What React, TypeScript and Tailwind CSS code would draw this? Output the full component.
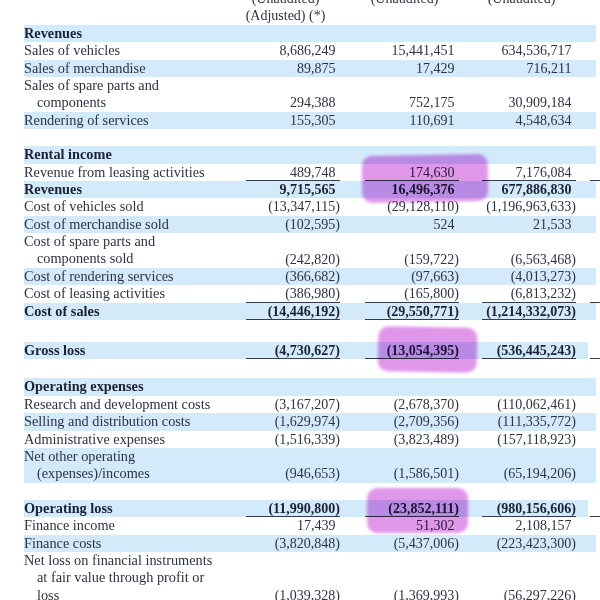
import React from 'react';

type Row = {
  lines: string[];
  vals?: [string, string, string];
  bold?: boolean;
  blue?: boolean;
  ul?: boolean;
  ulEdge?: boolean;
};

type Block = { gap: string; rows: Row[] };

const blocks: Block[] = [
  {
    gap: 'mt-0',
    rows: [
      { lines: ['Revenues'], bold: true, blue: true },
      { lines: ['Sales of vehicles'], vals: ['8,686,249', '15,441,451', '634,536,717'] },
      { lines: ['Sales of merchandise'], vals: ['89,875', '17,429', '716,211'], blue: true },
      { lines: ['Sales of spare parts and', 'components'], vals: ['294,388', '752,175', '30,909,184'] },
      { lines: ['Rendering of services'], vals: ['155,305', '110,691', '4,548,634'], blue: true },
    ],
  },
  {
    gap: 'mt-[17px]',
    rows: [
      { lines: ['Rental income'], bold: true, blue: true },
      { lines: ['Revenue from leasing activities'], vals: ['489,748', '174,630', '7,176,084'], ul: true, ulEdge: true },
      { lines: ['Revenues'], vals: ['9,715,565', '16,496,376', '677,886,830'], bold: true, blue: true },
      { lines: ['Cost of vehicles sold'], vals: ['(13,347,115)', '(29,128,110)', '(1,196,963,633)'] },
      { lines: ['Cost of merchandise sold'], vals: ['(102,595)', '524', '21,533'], blue: true },
      { lines: ['Cost of spare parts and', 'components sold'], vals: ['(242,820)', '(159,722)', '(6,563,468)'] },
      { lines: ['Cost of rendering services'], vals: ['(366,682)', '(97,663)', '(4,013,273)'], blue: true },
      { lines: ['Cost of leasing activities'], vals: ['(386,980)', '(165,800)', '(6,813,232)'], ul: true, ulEdge: true },
      { lines: ['Cost of sales'], vals: ['(14,446,192)', '(29,550,771)', '(1,214,332,073)'], bold: true, blue: true, ul: true },
    ],
  },
  {
    gap: 'mt-[22px]',
    rows: [
      { lines: ['Gross loss'], vals: ['(4,730,627)', '(13,054,395)', '(536,445,243)'], bold: true, blue: true, ul: true, ulEdge: true },
    ],
  },
  {
    gap: 'mt-[19px]',
    rows: [
      { lines: ['Operating expenses'], bold: true, blue: true },
      { lines: ['Research and development costs'], vals: ['(3,167,207)', '(2,678,370)', '(110,062,461)'] },
      { lines: ['Selling and distribution costs'], vals: ['(1,629,974)', '(2,709,356)', '(111,335,772)'], blue: true },
      { lines: ['Administrative expenses'], vals: ['(1,516,339)', '(3,823,489)', '(157,118,923)'] },
      { lines: ['Net other operating', '(expenses)/incomes'], vals: ['(946,653)', '(1,586,501)', '(65,194,206)'], blue: true },
    ],
  },
  {
    gap: 'mt-[17px]',
    rows: [
      { lines: ['Operating loss'], vals: ['(11,990,800)', '(23,852,111)', '(980,156,606)'], bold: true, blue: true, ul: true, ulEdge: true },
      { lines: ['Finance income'], vals: ['17,439', '51,302', '2,108,157'] },
      { lines: ['Finance costs'], vals: ['(3,820,848)', '(5,437,006)', '(223,423,300)'], blue: true },
      {
        lines: ['Net loss on financial instruments', 'at fair value through profit or', 'loss'],
        vals: ['(1,039,328)', '(1,369,993)', '(56,297,226)'],
      },
    ],
  },
];

function Value({ v, ul, bold }: { v: string; ul?: boolean; bold?: boolean }) {
  const paren = v.endsWith(')');
  return (
    <div className="w-[100px] flex justify-end">
      <div
        className={`w-[94px] h-[17.4px] leading-[17.4px] text-right ${paren ? '' : 'pr-[4.5px]'} ${
          ul ? 'border-b-[1.5px] border-[#363a4a]' : ''
        } ${bold ? 'font-bold text-[#1c2135]' : ''}`}
      >
        {v}
      </div>
    </div>
  );
}

function LineItem({ row }: { row: Row }) {
  const n = row.lines.length;
  return (
    <div className="flex">
      <div className={`flex w-[572px] ${row.blue ? 'bg-[#d2eafa]' : ''}`}>
        <div className="w-[216px] text-[14.3px]">
          {row.lines.map((l, i) => (
            <div
              key={i}
              className={`h-[17.4px] leading-[17.4px] whitespace-nowrap ${i > 0 ? 'pl-[13px]' : ''} ${
                row.bold ? 'font-bold text-[#1c2135]' : ''
              }`}
            >
              {l}
            </div>
          ))}
        </div>
        {row.vals && (
          <div className="flex items-end" style={{ height: `${n * 17.4}px` }}>
            <Value v={row.vals[0]} ul={row.ul} bold={row.bold} />
            <div className="w-[19px]" />
            <Value v={row.vals[1]} ul={row.ul} bold={row.bold} />
            <div className="w-[17px]" />
            <Value v={row.vals[2]} ul={row.ul} bold={row.bold} />
          </div>
        )}
      </div>
      <div className="flex items-end pl-[2px]">
        {row.ulEdge && <div className="w-[10px] h-[17.4px] border-b-[1.5px] border-[#363a4a]" />}
      </div>
    </div>
  );
}

export default function App() {
  return (
    <div
      className="relative w-[600px] h-[600px] overflow-hidden bg-white text-[14px] text-[#2d3244]"
      style={{ fontFamily: '"Liberation Serif", "Times New Roman", serif' }}
    >
      <div className="pl-[24px]">
        {/* column headers, top line cut by the crop as in the scan */}
        <div className="-mt-[10px] flex">
          <div className="w-[216px]" />
          {[['(Unaudited)', '(Adjusted) (*)'], ['(Unaudited)'], ['(Unaudited)']].map((h, i) => (
            <div key={i} className={`w-[100px] pr-[9px] text-center ${i === 1 ? 'ml-[19px]' : i === 2 ? 'ml-[17px]' : ''}`}>
              {h.map((t) => (
                <div key={t} className="h-[17.4px] leading-[17.4px] whitespace-nowrap">
                  {t}
                </div>
              ))}
            </div>
          ))}
        </div>

        {blocks.map((b, i) => (
          <div key={i} className={b.gap}>
            {b.rows.map((r, j) => (
              <LineItem key={j} row={r} />
            ))}
          </div>
        ))}
      </div>

      {/* highlighter marks */}
      <div className="pointer-events-none absolute left-[362px] top-[155px] w-[126px] h-[47px] rounded-[10px] bg-[#d97ce4] opacity-80 mix-blend-multiply blur-[1.5px] -rotate-[1deg]" />
      <div className="pointer-events-none absolute left-[378px] top-[327px] w-[99px] h-[45px] rounded-[10px] bg-[#d97ce4] opacity-80 mix-blend-multiply blur-[1.5px] rotate-[1deg]" />
      <div className="pointer-events-none absolute left-[367px] top-[488px] w-[101px] h-[45px] rounded-[10px] bg-[#d97ce4] opacity-80 mix-blend-multiply blur-[1.5px]" />
    </div>
  );
}
